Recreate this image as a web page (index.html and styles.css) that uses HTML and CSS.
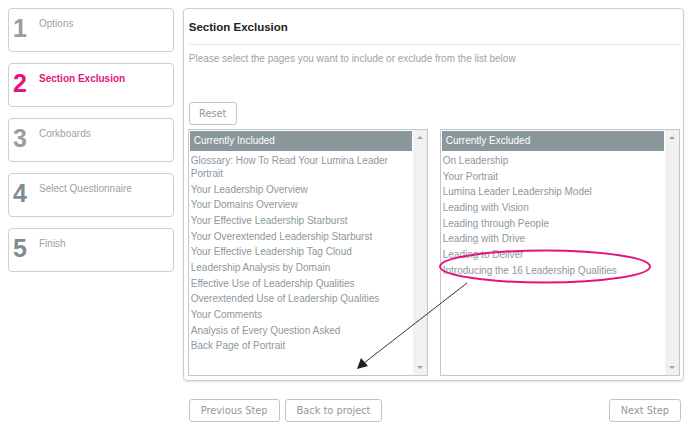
FILE: index.html
```html
<!DOCTYPE html>
<html lang="en">
<head>
    <meta charset="UTF-8">
    <title>Section Exclusion</title>
    <link rel="stylesheet" href="styles.css">
</head>
<body>
    <div class="page">
        <div class="steps">
            <div class="step done"><span class="step-no">1</span><span class="step-label">Options</span></div>
            <div class="step active"><span class="step-no">2</span><span class="step-label">Section Exclusion</span></div>
            <div class="step done"><span class="step-no">3</span><span class="step-label">Corkboards</span></div>
            <div class="step"><span class="step-no">4</span><span class="step-label">Select Questionnaire</span></div>
            <div class="step"><span class="step-no">5</span><span class="step-label">Finish</span></div>
        </div>

        <div class="content">
            <div class="panel">
                <h2 class="panel-title">Section Exclusion</h2>
                <hr class="divider">
                <p class="hint">Please select the pages you want to include or exclude from the list below</p>
                <button class="btn reset" type="button">Reset</button>

                <div class="lists">
                    <div class="list">
                        <div class="list-body">
                            <div class="list-head">Currently Included</div>
                            <div class="item">Glossary: How To Read Your Lumina Leader Portrait</div>
                            <div class="item">Your Leadership Overview</div>
                            <div class="item">Your Domains Overview</div>
                            <div class="item">Your Effective Leadership Starburst</div>
                            <div class="item">Your Overextended Leadership Starburst</div>
                            <div class="item">Your Effective Leadership Tag Cloud</div>
                            <div class="item">Leadership Analysis by Domain</div>
                            <div class="item">Effective Use of Leadership Qualities</div>
                            <div class="item">Overextended Use of Leadership Qualities</div>
                            <div class="item">Your Comments</div>
                            <div class="item">Analysis of Every Question Asked</div>
                            <div class="item">Back Page of Portrait</div>
                        </div>
                        <div class="scrollbar"><span class="arrow up"></span><span class="arrow down"></span></div>
                    </div>
                    <div class="list">
                        <div class="list-body">
                            <div class="list-head">Currently Excluded</div>
                            <div class="item">On Leadership</div>
                            <div class="item">Your Portrait</div>
                            <div class="item">Lumina Leader Leadership Model</div>
                            <div class="item">Leading with Vision</div>
                            <div class="item">Leading through People</div>
                            <div class="item">Leading with Drive</div>
                            <div class="item">Leading to Deliver</div>
                            <div class="item">Introducing the 16 Leadership Qualities</div>
                        </div>
                        <div class="scrollbar"><span class="arrow up"></span><span class="arrow down"></span></div>
                    </div>
                </div>
            </div>

            <div class="actions">
                <button class="btn" type="button">Previous Step</button>
                <button class="btn" type="button">Back to project</button>
                <button class="btn next" type="button">Next Step</button>
            </div>
        </div>
    </div>

    <!-- annotation drawn over the screenshot -->
    <svg class="markup" width="688" height="440" viewBox="0 0 688 440">
        <ellipse cx="545" cy="266.5" rx="105" ry="16" fill="none" stroke="#e4147c" stroke-width="2"/>
        <line x1="467" y1="283" x2="364" y2="363" stroke="#333" stroke-width="1"/>
        <polygon points="357,369 361,358 368,366" fill="#222"/>
    </svg>
</body>
</html>
```

FILE: styles.css
```css
body {
    margin: 0;
    font-family: "Liberation Sans", Arial, sans-serif;
    background: #fff;
}

.page {
    display: flex;
    gap: 9px;
    padding: 8px 4px 0 8px;
}

.steps {
    width: 166px;
    display: flex;
    flex-direction: column;
    gap: 11px;
}

.step {
    height: 44px;
    box-sizing: border-box;
    border: 1px solid #cfcfcf;
    border-radius: 4px;
    padding: 5px 4px 0 4px;
    display: flex;
    align-items: flex-start;
}

.step-no {
    width: 26px;
    font-size: 25px;
    line-height: 28px;
    font-weight: bold;
    color: #7f8c90;
}

.step-label {
    margin-top: 3px;
    font-size: 10px;
    line-height: 13px;
    color: #9aa2a6;
}

.step.done .step-no {
    color: #9c9c9c;
}

.step.active .step-no,
.step.active .step-label {
    color: #e4147c;
}

.step.active .step-label {
    font-weight: bold;
}

.content {
    width: 502px;
    display: flex;
    flex-direction: column;
}

.panel {
    height: 373px;
    box-sizing: border-box;
    border: 1px solid #cdcdcd;
    border-radius: 4px;
    padding: 11px 2px 0 5px;
    box-shadow: 0 1px 2px rgba(0, 0, 0, 0.12);
}

.panel-title {
    margin: 0;
    font-size: 11.5px;
    line-height: 15px;
    color: #222;
}

.divider {
    margin: 9px 0 0 0;
    border: 0;
    border-top: 1px solid #e6e6e6;
}

.hint {
    margin: 7px 0 0 0;
    font-size: 10px;
    line-height: 14px;
    color: #9aa3a8;
}

.btn {
    height: 23px;
    box-sizing: border-box;
    border: 1px solid #c4c4c4;
    border-radius: 3px;
    background: #fff;
    padding: 0 10px;
    font-family: "DejaVu Sans", Verdana, sans-serif;
    font-size: 9.8px;
    color: #8f999e;
}

.reset {
    display: block;
    width: 48px;
    padding: 0;
    margin-top: 36px;
}

.lists {
    margin: 4px 0 0 -1px;
    display: grid;
    grid-template-columns: 240px 240px;
    gap: 12px;
}

.list {
    height: 247px;
    box-sizing: border-box;
    border: 1px solid #c6c6c6;
    display: flex;
}

.list-body {
    flex: 1;
    padding: 1px;
    overflow: hidden;
}

.list-head {
    height: 20px;
    line-height: 20px;
    padding-left: 4px;
    margin-bottom: 1.5px;
    background: #8b989b;
    color: #fff;
    font-size: 10px;
}

.item {
    padding: 1.35px 1px;
    font-size: 10px;
    line-height: 13px;
    color: #8c989e;
}

.scrollbar {
    width: 14px;
    background: #f1f1f1;
    display: flex;
    flex-direction: column;
    justify-content: space-between;
    align-items: center;
    padding: 6px 0;
    box-sizing: border-box;
}

.arrow {
    width: 0;
    height: 0;
    border-left: 3px solid transparent;
    border-right: 3px solid transparent;
}

.arrow.up {
    border-bottom: 3px solid #a3a3a3;
}

.arrow.down {
    border-top: 3px solid #a3a3a3;
}

.actions {
    margin-top: 18px;
    display: flex;
    gap: 5px;
    padding: 0 3px 0 6px;
}

.actions .btn {
    padding: 0 11px;
}

.actions .next {
    margin-left: auto;
}

.markup {
    position: absolute;
    left: 0;
    top: 0;
    pointer-events: none;
}
```
